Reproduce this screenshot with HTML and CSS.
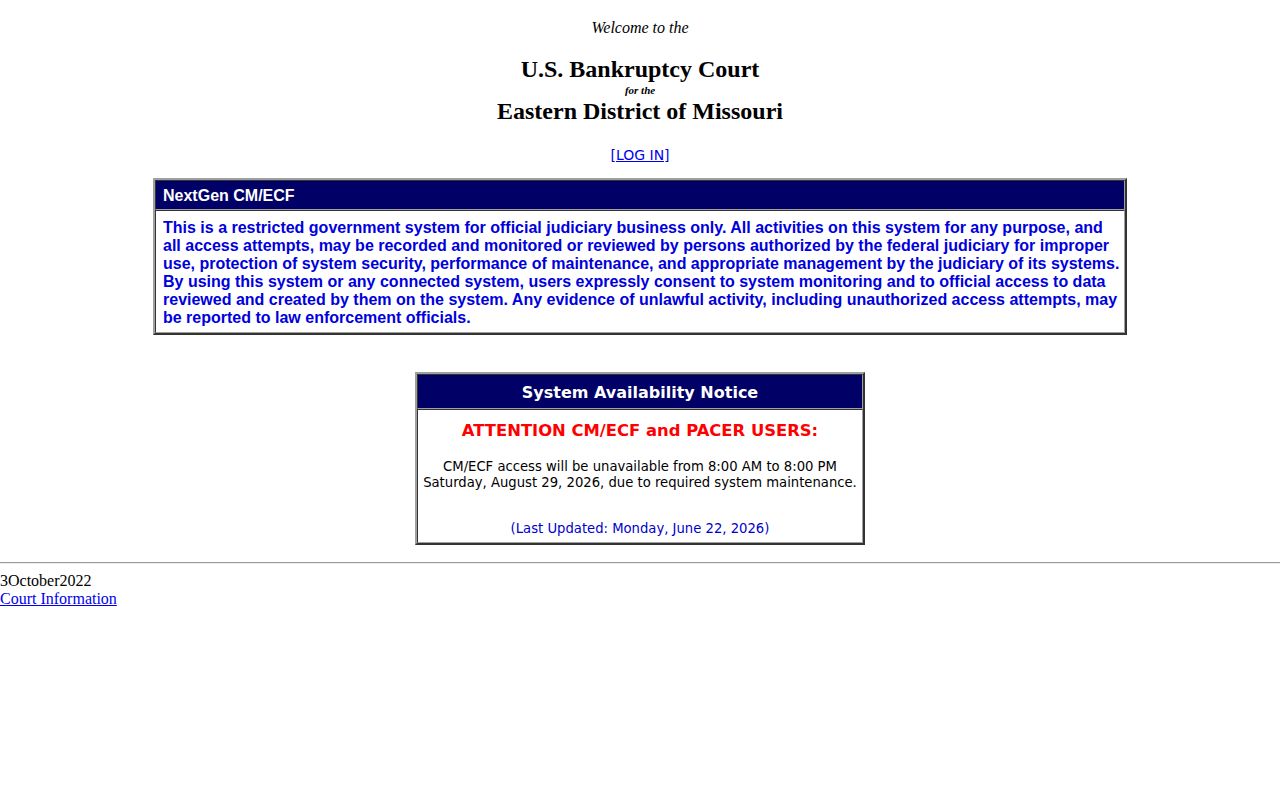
FILE: index.html
```html
<!DOCTYPE html>
<html>
<head>
<meta charset="utf-8">
<title>U.S. Bankruptcy Court - Eastern District of Missouri</title>
<link rel="stylesheet" href="styles.css">
</head>
<body>
<div class="masthead">
  <div class="welcome">Welcome to the</div>
  <div class="court">U.S. Bankruptcy Court</div>
  <div class="forthe">for the</div>
  <div class="court">Eastern District of Missouri</div>
  <div class="login"><a href="#">[LOG IN]</a></div>
</div>

<div class="panel warn">
  <div class="cell head-left">NextGen CM/ECF</div>
  <div class="cell warn-body">This is a restricted government system for official judiciary business only. All activities on this system for any purpose, and all access attempts, may be recorded and monitored or reviewed by persons authorized by the federal judiciary for improper use, protection of system security, performance of maintenance, and appropriate management by the judiciary of its systems. By using this system or any connected system, users expressly consent to system monitoring and to official access to data reviewed and created by them on the system. Any evidence of unlawful activity, including unauthorized access attempts, may be reported to law enforcement officials.</div>
</div>

<div class="panel notice">
  <div class="cell head-center">System Availability Notice</div>
  <div class="cell notice-body">
    <div class="attention">ATTENTION CM/ECF and PACER USERS:</div>
    <div class="msg">CM/ECF access will be unavailable from 8:00 AM to 8:00 PM<br>Saturday, August 29, 2026, due to required system maintenance.</div>
    <div class="updated">(Last Updated: Monday, June 22, 2026)</div>
  </div>
</div>

<hr class="rule">
<div class="footer">
  <div>3October2022</div>
  <a href="#">Court Information</a>
</div>
</body>
</html>
```

FILE: styles.css
```css
body {
  margin: 0;
  font-family: "Liberation Serif", "Times New Roman", serif;
  font-size: 16px;
  color: #000;
  background: #fff;
}
.masthead {
  text-align: center;
  padding-top: 18px;
}
.welcome {
  font-style: italic;
  font-size: 16px;
  line-height: 20px;
  margin-bottom: 17px;
}
.court {
  font-weight: bold;
  font-size: 24px;
  line-height: 28px;
}
.forthe {
  font-weight: bold;
  font-style: italic;
  font-size: 11px;
  line-height: 14px;
}
.login {
  font-family: "DejaVu Sans", Verdana, sans-serif;
  font-size: 14px;
  line-height: 16px;
  margin-top: 22px;
}
.login a { color: #0000ee; }

.panel {
  margin: 0 auto;
  border: 2px solid;
  border-color: #a0a0a0 #333333 #333333 #a0a0a0;
  display: flex;
  flex-direction: column;
  box-sizing: border-box;
}
.cell {
  border: 1px solid;
  border-color: #333333 #a0a0a0 #a0a0a0 #333333;
}
.warn {
  width: 974px;
  margin-top: 15px;
}
.head-left {
  background: #000066;
  color: #fff;
  font-family: "Liberation Sans", Arial, sans-serif;
  font-weight: bold;
  font-size: 16px;
  line-height: 18px;
  padding: 6px 3px 4px 7px;
}
.warn-body {
  color: #0000dd;
  font-family: "Liberation Sans", Arial, sans-serif;
  font-weight: bold;
  font-size: 16px;
  line-height: 18px;
  padding: 8px 2px 5px 7px;
}
.notice {
  width: 450px;
  margin-top: 37px;
}
.head-center {
  background: #000066;
  color: #fff;
  text-align: center;
  font-family: "DejaVu Sans", Verdana, sans-serif;
  font-weight: bold;
  font-size: 16px;
  line-height: 20px;
  padding: 8px 4px 5px;
}
.notice-body {
  text-align: center;
  font-family: "DejaVu Sans", Verdana, sans-serif;
  padding: 11px 2px 5px;
}
.attention {
  color: #ff0000;
  font-weight: bold;
  font-size: 16.4px;
  line-height: 20px;
}
.msg {
  font-size: 13.2px;
  line-height: 16px;
  margin-top: 18px;
}
.updated {
  color: #0000cc;
  font-size: 13.2px;
  line-height: 16px;
  margin-top: 30px;
}
.rule {
  margin: 17px 0 0;
  border: 0;
  border-top: 1px solid #9a9a9a;
  border-bottom: 1px solid #eeeeee;
  height: 0;
}
.footer {
  padding-top: 8px;
  line-height: 18px;
}
.footer a { color: #0000ee; }
```
